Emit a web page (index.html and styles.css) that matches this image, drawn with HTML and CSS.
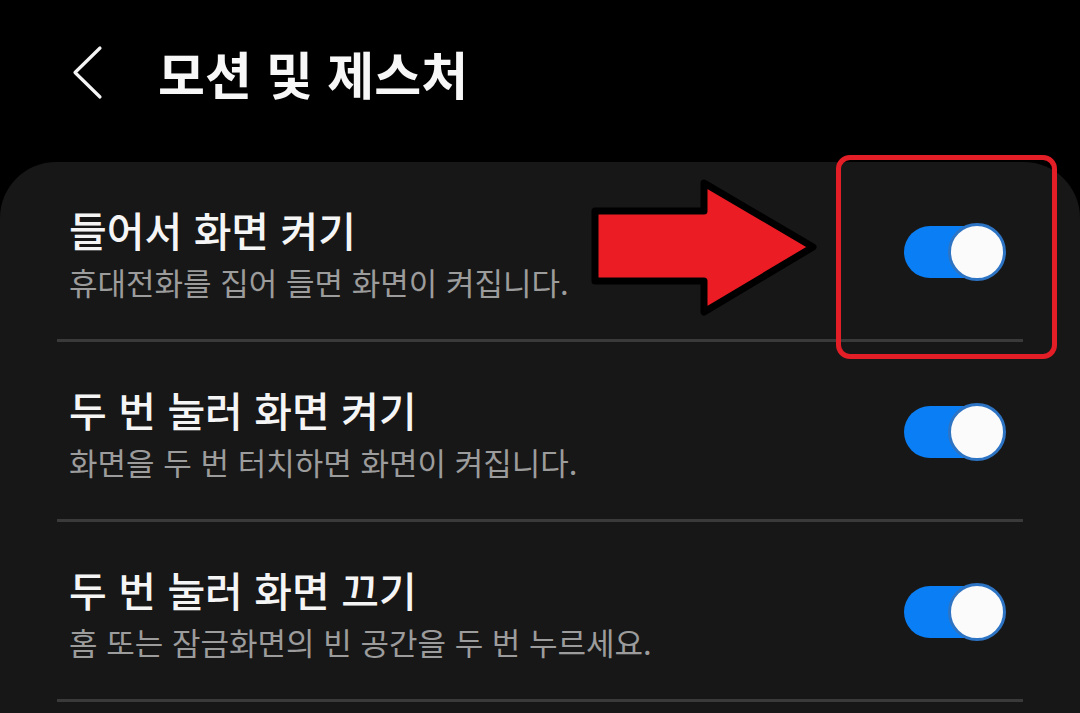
FILE: index.html
```html
<!DOCTYPE html>
<html lang="ko">
<head>
<meta charset="utf-8">
<link rel="stylesheet" href="styles.css">
</head>
<body>
<div class="screen">
  <header class="header">
    <svg class="back" width="32" height="56" viewBox="0 0 32 56">
      <path d="M28 3 L3 27.5 L28 52" fill="none" stroke="#f5f5f5" stroke-width="3.2" stroke-linecap="round" stroke-linejoin="round"/>
    </svg>
    <h1 class="title">모션 및 제스처</h1>
  </header>
  <section class="card">
    <div class="row">
      <div class="text">
        <div class="row-title">들어서 화면 켜기</div>
        <div class="row-sub">휴대전화를 집어 들면 화면이 켜집니다.</div>
      </div>
      <div class="toggle"><span class="thumb"></span></div>
    </div>
    <div class="row">
      <div class="text">
        <div class="row-title">두 번 눌러 화면 켜기</div>
        <div class="row-sub">화면을 두 번 터치하면 화면이 켜집니다.</div>
      </div>
      <div class="toggle"><span class="thumb"></span></div>
    </div>
    <div class="row">
      <div class="text">
        <div class="row-title">두 번 눌러 화면 끄기</div>
        <div class="row-sub">홈 또는 잠금화면의 빈 공간을 두 번 누르세요.</div>
      </div>
      <div class="toggle"><span class="thumb"></span></div>
    </div>
  </section>
  <svg class="arrow" width="240" height="150" viewBox="0 0 240 150">
    <path d="M12 33 L121 33 L121 5 L230 69 L121 134 L121 103 L12 103 Z" fill="#ec1c24" stroke="#000" stroke-width="7" stroke-linejoin="round"/>
  </svg>
  <div class="highlight"></div>
</div>
</body>
</html>
```
FILE: styles.css
```css
* { box-sizing: border-box; }
html, body {
  margin: 0;
  padding: 0;
  background: #000;
}
body {
  font-family: "Noto Sans CJK KR", "Noto Sans", sans-serif;
  width: 1080px;
  height: 713px;
  overflow: hidden;
}
.screen {
  position: relative;
  width: 1080px;
  height: 713px;
}
.header {
  height: 162px;
  display: flex;
  align-items: center;
  padding-left: 72px;
  padding-bottom: 16px;
}
.back {
  display: block;
  margin-right: 54px;
}
.title {
  margin: 0;
  font-size: 51px;
  font-weight: 700;
  color: #f7f7f7;
  line-height: 74px;
}
.card {
  background: #171717;
  border-radius: 56px 56px 0 0;
  height: 560px;
  padding: 0 57px;
}
.row {
  height: 180px;
  display: flex;
  align-items: center;
  justify-content: space-between;
  border-bottom: 3px solid #3a3a3a;
  padding-left: 12px;
  padding-right: 19px;
}
.text {
  display: flex;
  flex-direction: column;
  padding-top: 2px;
}
.row-title {
  font-size: 41px;
  font-weight: 500;
  color: #f5f5f5;
  line-height: 60px;
}
.row-sub {
  font-size: 31px;
  color: #9c9c9c;
  line-height: 45px;
}
.toggle {
  position: relative;
  width: 100px;
  height: 52px;
  border-radius: 26px;
  background: #0a7ff5;
  margin-top: 2px;
}
.thumb {
  position: absolute;
  right: -2px;
  top: -3px;
  width: 58px;
  height: 58px;
  border-radius: 50%;
  background: #fbfbfb;
  border: 3px solid #2e74c4;
}
.arrow {
  position: absolute;
  left: 583px;
  top: 178px;
}
.highlight {
  position: absolute;
  left: 836px;
  top: 155px;
  width: 221px;
  height: 204px;
  border: 5px solid #e31e26;
  border-radius: 14px;
}
```
